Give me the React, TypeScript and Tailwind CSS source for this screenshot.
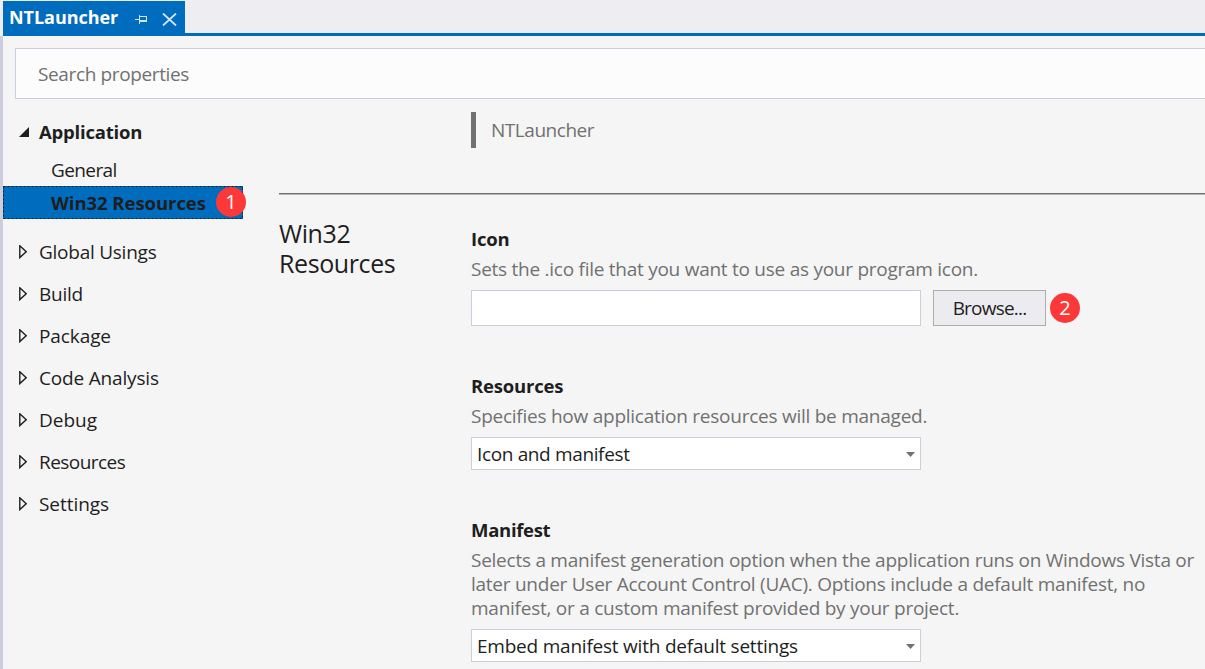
import React from "react";

const categories = [
  { label: "Global Usings", spacing: "tracking-[-0.25px]" },
  { label: "Build", spacing: "tracking-[-0.25px]" },
  { label: "Package", spacing: "tracking-[-0.1px]" },
  { label: "Code Analysis", spacing: "tracking-[-0.17px]" },
  { label: "Debug", spacing: "tracking-[0px]" },
  { label: "Resources", spacing: "tracking-[-0.55px]" },
  { label: "Settings", spacing: "tracking-[-0.05px]" },
];

function Tab() {
  return (
    <header className="flex h-9 shrink-0 flex-col bg-[#eeeef2] pl-[3px] pt-px">
      <div className="flex h-8 w-[182px] items-center bg-[#006cbe] pl-1.5 text-white">
        <span className="w-[126px] text-[18px] font-bold tracking-[-0.05px]">NTLauncher</span>
        <svg className="mt-1" width="12" height="12" viewBox="0 0 12 12" fill="none" stroke="#cfe6f8" shapeRendering="crispEdges">
          <path d="M0 6.5H5M4.5 2V11M5 3.5H11.5V9" />
          <path d="M5 8H12" strokeWidth="2" />
        </svg>
        <svg className="ml-[15px] mt-1" width="15" height="13" viewBox="0 0 15 13" fill="none" stroke="#cfe6f8" strokeWidth="1.8">
          <path d="M1 .5L14 12.5M14 .5L1 12.5" />
        </svg>
      </div>
      <div className="h-[3px] bg-[#006cbe]" />
    </header>
  );
}

function Badge({ children }: { children: React.ReactNode }) {
  return (
    <span className="flex size-[30px] shrink-0 items-center justify-center rounded-full bg-[#fc3938] pb-px text-[20px] font-normal leading-none text-white">
      {children}
    </span>
  );
}

function Sidebar() {
  return (
    <nav className="w-[276px] shrink-0 pt-[13px]">
      <div className="flex h-10 items-center pl-4">
        <svg className="mr-[10px]" width="10" height="10" viewBox="0 0 10 10">
          <path d="M10 0V10H0Z" fill="#1e1e1e" />
        </svg>
        <span className="text-[18.5px] font-bold tracking-[-0.2px]">Application</span>
      </div>
      <div className="flex h-[34px] items-center pl-12 pt-0.5 tracking-[-0.6px]">General</div>
      <div className="relative flex h-[33px] w-60 items-center bg-[#006cbe] pl-12 font-bold">
        <svg className="absolute inset-0" width="240" height="33" fill="none" stroke="#1e1e1e" strokeDasharray="2 2">
          <rect x=".5" y=".5" width="239" height="32" />
        </svg>
        <span className="w-[165px] shrink-0 text-[18.5px] tracking-[-0.05px]">Win32 Resources</span>
        <div className="relative pb-px">
          <Badge>1</Badge>
        </div>
      </div>
      <div className="pt-3">
        {categories.map((c) => (
          <div key={c.label} className="flex h-[42px] items-center pl-4">
            <svg className="mr-3 shrink-0" width="8" height="14" viewBox="0 0 8 14" fill="none" stroke="#1e1e1e" strokeWidth="1.4">
              <path d="M.8 .8V12.6L7.2 6.7Z" />
            </svg>
            <span className={c.spacing}>{c.label}</span>
          </div>
        ))}
      </div>
    </nav>
  );
}

function Select({ children }: { children: React.ReactNode }) {
  return (
    <div className="flex h-[33px] w-[450px] items-center justify-between border border-[#cccedb] bg-white px-[5px]">
      {children}
      <svg className="mt-0.5" width="9" height="5" viewBox="0 0 9 5">
        <path d="M0 0H9L4.5 5Z" fill="#717171" />
      </svg>
    </div>
  );
}

export default function App() {
  return (
    <div className="flex h-[669px] w-[1205px] flex-col overflow-hidden whitespace-nowrap bg-[#f5f5f5] font-['Open_Sans','Noto_Sans',sans-serif] text-[19px] text-[#1e1e1e]">
      <Tab />
      <div className="flex min-h-0 flex-1 flex-col border-l-[3px] border-[#cccedb]">
        <div className="ml-3 mt-3 flex h-[51px] shrink-0 items-center border border-r-0 border-[#cccedb] bg-[#fcfcfc] pl-[22px] pt-0.5 tracking-[-0.37px] text-[#717171]">
          Search properties
        </div>
        <div className="flex min-h-0 flex-1">
          <Sidebar />
          <main className="min-w-0 flex-1">
            <div className="ml-48 mt-[13px] flex h-9 items-center border-l-[5px] border-[#717171] pl-[15px] tracking-[-0.46px] text-[#717171]">
              NTLauncher
            </div>
            <div className="mt-[45px] h-0.5 border-t border-[#717171] bg-[#b3b3b3]" />
            <div className="flex">
              <h1 className="w-48 shrink-0 whitespace-pre-line pt-[23px] text-[25px] leading-[30px] tracking-[-0.4px]">
                {"Win32\nResources"}
              </h1>
              <div>
                <section className="h-[147px] pt-[30px]">
                  <h2 className="h-8 text-[18.5px] font-bold leading-[27px] tracking-[-0.2px]">Icon</h2>
                  <p className="h-[33px] leading-6 tracking-[-0.26px] text-[#717171]">
                    Sets the .ico file that you want to use as your program icon.
                  </p>
                  <div className="flex items-center">
                    <div className="h-9 w-[450px] border border-[#cccedb] bg-white" />
                    <button className="ml-3 mr-1 h-9 w-[113px] border border-[#acacac] bg-[#ececf0] tracking-[-0.8px]">
                      Browse...
                    </button>
                    <Badge>2</Badge>
                  </div>
                </section>
                <section className="h-36 pt-[30px]">
                  <h2 className="h-8 text-[18.5px] font-bold leading-[27px] tracking-[-0.2px]">Resources</h2>
                  <p className="h-[33px] leading-6 tracking-[-0.25px] text-[#717171]">
                    Specifies how application resources will be managed.
                  </p>
                  <Select>
                    <span className="pt-0.5 tracking-[-0.36px]">Icon and manifest</span>
                  </Select>
                </section>
                <section className="pt-[30px]">
                  <h2 className="h-8 text-[18.5px] font-bold leading-[27px] tracking-[-0.3px]">Manifest</h2>
                  <p className="h-[81px] leading-6 tracking-[-0.255px] text-[#717171]">
                    <span className="block">Selects a manifest generation option when the application runs on Windows Vista or</span>
                    <span className="block">later under User Account Control (UAC). Options include a default manifest, no</span>
                    <span className="block">manifest, or a custom manifest provided by your project.</span>
                  </p>
                  <Select>
                    <span className="pt-0.5 tracking-[-0.22px]">Embed manifest with default settings</span>
                  </Select>
                </section>
              </div>
            </div>
          </main>
        </div>
      </div>
    </div>
  );
}
